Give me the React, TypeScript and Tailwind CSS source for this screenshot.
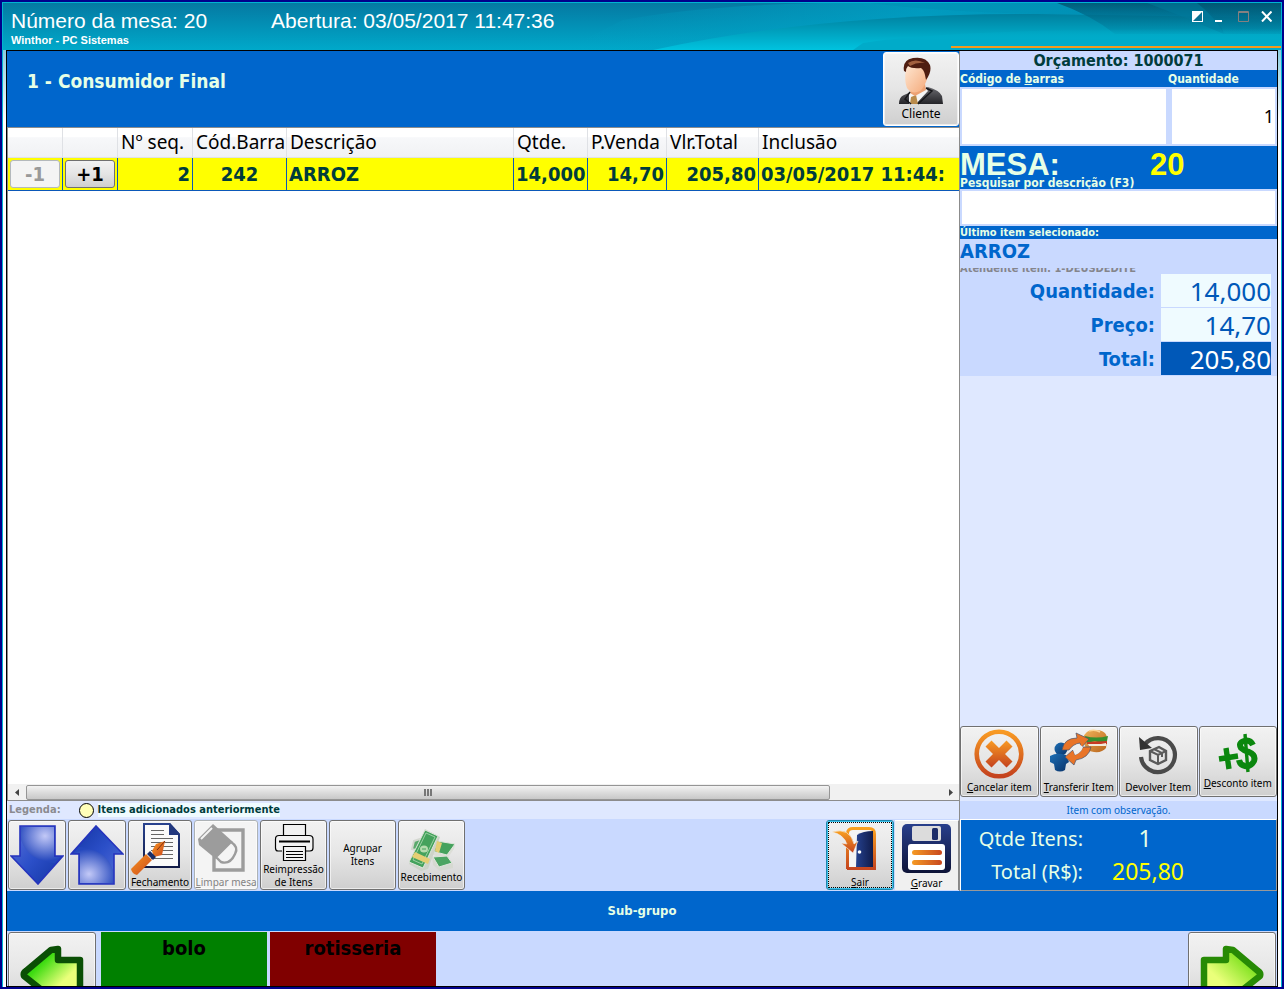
import type { ReactNode } from "react";

const BOLD = "font-['DejaVu_Sans_Condensed','DejaVu_Sans',sans-serif] font-bold";

type ToolButtonProps = {
  children: ReactNode;
  className?: string;
  disabled?: boolean;
};

function ToolButton({ children, className = "", disabled = false }: ToolButtonProps) {
  return (
    <button
      type="button"
      disabled={disabled}
      className={
        "flex shrink-0 flex-col items-center overflow-hidden rounded-[3px] border bg-linear-to-b text-[10px] leading-[13px] whitespace-nowrap ring-1 ring-white/60 ring-inset " +
        (disabled
          ? "border-[#adb2b5] bg-[#f4f4f4] text-[#838383] "
          : "border-[#707070] from-[#f2f2f2] from-0% via-[#e6e6e6] via-48% to-[#cfcfcf] text-black ") +
        className
      }
    >
      {children}
    </button>
  );
}

function HeaderBackdrop() {
  return (
    <svg className="absolute inset-0 h-full w-full" viewBox="0 0 1278 47" preserveAspectRatio="none" aria-hidden="true">
      <defs>
        <linearGradient id="hb" x1="0" y1="0" x2="0" y2="1">
          <stop offset="0" stopColor="#0579a2" />
          <stop offset="1" stopColor="#00a9ca" />
        </linearGradient>
        <linearGradient id="hc" x1="0" y1="0" x2="1" y2="0">
          <stop offset="0" stopColor="#00a3c6" stopOpacity="0" />
          <stop offset="0.5" stopColor="#00a3c6" stopOpacity="0.75" />
          <stop offset="1" stopColor="#0092b8" stopOpacity="0.6" />
        </linearGradient>
        <linearGradient id="hd" x1="0" y1="0" x2="0" y2="1">
          <stop offset="0" stopColor="#00809f" />
          <stop offset="1" stopColor="#00c3df" />
        </linearGradient>
        <linearGradient id="he" x1="0" y1="0" x2="0" y2="1">
          <stop offset="0" stopColor="#005773" stopOpacity="0.9" />
          <stop offset="1" stopColor="#007d9f" stopOpacity="0.25" />
        </linearGradient>
        <linearGradient id="hf" x1="0" y1="0" x2="0" y2="1">
          <stop offset="0" stopColor="#00abc9" stopOpacity="0" />
          <stop offset="0.5" stopColor="#00abc9" />
        </linearGradient>
      </defs>
      <rect width="1278" height="47" fill="url(#hb)" />
      <path d="M560 47 L620 17 Q700 2 820 0 H1278 V47Z" fill="url(#hc)" />
      <path d="M650 47 Q820 10 1035 11 L1278 15 V47Z" fill="url(#hd)" />
      <path d="M868 0 Q950 10 1054 11 H1078 L1054 0Z" fill="#0090b4" opacity="0.5" />
      <path d="M1054 0 Q1088 12 1112 31 H1278 V0Z" fill="url(#he)" />
      <path d="M1144 0 Q1182 14 1221 31 Q1215 12 1194 0Z" fill="#007a9c" opacity="0.5" />
      <path d="M1194 0 Q1212 14 1221 31 H1278 V0Z" fill="url(#he)" />
      <path d="M860 40 Q960 24 1278 26 V47 H850Z" fill="url(#hf)" />
    </svg>
  );
}

function ClientIcon() {
  return (
    <svg width="46" height="48" viewBox="0 0 46 48" aria-hidden="true">
      <defs>
        <linearGradient id="face" x1="0" y1="0" x2="1" y2="1">
          <stop offset="0" stopColor="#ffe9d5" />
          <stop offset="1" stopColor="#f4a878" />
        </linearGradient>
        <linearGradient id="suit" x1="0" y1="0" x2="0" y2="1">
          <stop offset="0" stopColor="#6b6b70" />
          <stop offset="1" stopColor="#242428" />
        </linearGradient>
      </defs>
      <path d="M1 47 Q1 40 6 38 L13 35 L30 30 Q41 33 44 39 L45 47Z" fill="url(#suit)" />
      <path d="M11 36 L14 33 L27 30 L30 34 L18 47 H11Z" fill="#f5f5f5" />
      <path d="M13 40 L18 38 L20 47 H12Z" fill="#b98b4c" />
      <path d="M14 28 L27 27 L28 33 L17 39 L12 36Z" fill="#eda274" />
      <path d="M8 12 Q6 24 9 31 Q14 38 22 34 Q27 30 30 19 L29 8 Q14 2 8 12Z" fill="url(#face)" />
      <path d="M6 14 Q4 3 15 1 Q28 -1 32 8 Q34 15 28 23 L27 18 Q26 13 23 11 Q14 12 10 9 Q8 11 8 15Z" fill="#4f1d10" />
      <path d="M10 6 Q17 1 27 6 Q19 5 12 9Z" fill="#a2603f" />
      <path d="M28 31 L34 34 L20 47 M12 35 L7 42 L13 47" fill="none" stroke="#17171a" strokeWidth="1.5" />
    </svg>
  );
}

function CancelIcon() {
  return (
    <svg width="50" height="50" viewBox="0 0 50 50" aria-hidden="true">
      <defs>
        <linearGradient id="cx" x1="0" y1="0" x2="0" y2="1">
          <stop offset="0" stopColor="#f89a23" />
          <stop offset="1" stopColor="#c4421e" />
        </linearGradient>
      </defs>
      <circle cx="25" cy="25" r="22.3" fill="none" stroke="url(#cx)" strokeWidth="4.6" />
      <path d="M17.500 11.500 L25 19 L32.500 11.500 L38.500 17.500 L31 25 L38.500 32.500 L32.500 38.500 L25 31 L17.500 38.500 L11.500 32.500 L19 25 L11.500 17.500Z" fill="url(#cx)" />
    </svg>
  );
}

function TransferIcon() {
  return (
    <svg width="60" height="43" viewBox="0 0 60 43" aria-hidden="true">
      <defs>
        <linearGradient id="bun" x1="0" y1="0" x2="1" y2="1">
          <stop offset="0" stopColor="#f1b45a" />
          <stop offset="1" stopColor="#b8641c" />
        </linearGradient>
        <linearGradient id="person" x1="0" y1="0" x2="1" y2="1">
          <stop offset="0" stopColor="#1d6fb5" />
          <stop offset="1" stopColor="#0a3268" />
        </linearGradient>
      </defs>
      <path d="M34 9 Q37 0 46 1 Q58 1 58 10 L57 19 Q53 24 45 23 Q37 22 36 17Z" fill="url(#bun)" />
      <path d="M36 7 Q47 10 59 7 L58 12 L52 14 L46 12 L38 14Z" fill="#35902e" />
      <path d="M40 2 Q46 0 51 3" stroke="#fbd595" strokeWidth="1.5" fill="none" />
      <path d="M38 13 L58 12 V15 H38Z" fill="#c63a23" />
      <path d="M39 15 L52 15 L57 14 V17 H40Z" fill="#f3ead9" />
      <circle cx="12" cy="20" r="6.5" fill="url(#person)" />
      <path d="M1 27 Q8 23 17 26 L20 33 L17 35 L16 41 Q11 44 6 41 L5 35 L1 33Z" fill="url(#person)" />
      <path d="M13 21 Q15 9 28 9 L27 4 L40 10 L32 19 L31 14 Q24 15 20 21Z" fill="#e87428" stroke="#48516b" strokeWidth="0.7" />
      <path d="M42 18 Q40 29 27 31 L25 36 L16 28 L24 21 L26 26 Q32 24 34 18Z" fill="#e87428" stroke="#48516b" strokeWidth="0.7" />
      <path d="M22 21 Q25 16 30 15 L34 18 Q32 24 26 26 L24 21Z" fill="#eeeeee" />
    </svg>
  );
}

function ReturnIcon() {
  return (
    <svg width="40" height="40" viewBox="0 0 40 40" aria-hidden="true">
      <path d="M7 9 A17 17 0 1 1 3 22" fill="none" stroke="#4a4a4a" strokeWidth="4.2" />
      <path d="M1 2 L2 15 L14 13Z" fill="#333" />
      <path d="M12 16 L21 12 L28 16 V25 L20 29 L12 25Z" fill="#e4e4e4" stroke="#5a5a5a" strokeWidth="2.4" />
      <path d="M12 16 L20 20 L28 16 M20 20 V29 M16 14 L24 18 V22" fill="none" stroke="#5a5a5a" strokeWidth="2" />
    </svg>
  );
}

function DiscountIcon() {
  return (
    <svg width="40" height="40" viewBox="0 0 40 40" aria-hidden="true">
      <g fill="none" stroke="#0b870e">
        <path d="M1 26 L20 23 M8 15 L11 36" strokeWidth="5.4" />
        <path d="M35 12 Q32 6 26 8 Q20 10 23 15 Q26 18 31 19 Q38 22 36 28 Q33 34 27 33 Q22 32 21 27" strokeWidth="6" />
        <path d="M27 1 L30 39" strokeWidth="3.4" />
      </g>
    </svg>
  );
}

function BlueArrow({ up = false }: { up?: boolean }) {
  return (
    <svg width="54" height="60" viewBox="0 0 54 60" aria-hidden="true" className={up ? "rotate-180" : ""}>
      <defs>
        <linearGradient id={up ? "bau" : "bad"} x1="0" y1="0" x2="1" y2="1">
          <stop offset="0" stopColor="#5b72d8" />
          <stop offset="0.5" stopColor="#2b4fc8" />
          <stop offset="1" stopColor="#1233a0" />
        </linearGradient>
        <radialGradient id={up ? "bgu" : "bgd"} cx="0.6" cy="0.25" r="0.7">
          <stop offset="0" stopColor="#c3c9f7" />
          <stop offset="1" stopColor="#2447bd" />
        </radialGradient>
      </defs>
      <path d="M10 1 H45 V31 H53 L28 59 L1 31 H10Z" fill={up ? "url(#bau)" : "url(#bad)"} />
      <path d="M11 2 H44 V32 H51 L45 38 Q18 36 11 15Z" fill={up ? "url(#bgu)" : "url(#bgd)"} />
      <path d="M10 1 H45 V31 H53 L28 59 L1 31 H10Z" fill="none" stroke="#2533bd" strokeWidth="1.6" />
    </svg>
  );
}

function InvoiceIcon() {
  return (
    <svg width="50" height="53" viewBox="0 0 50 53" aria-hidden="true" className="ml-[2px] self-start">
      <defs>
        <linearGradient id="pen" x1="0" y1="0" x2="1" y2="1">
          <stop offset="0" stopColor="#f7941e" />
          <stop offset="1" stopColor="#cc4a20" />
        </linearGradient>
        <linearGradient id="doc" x1="0" y1="0" x2="0" y2="1">
          <stop offset="0" stopColor="#28428f" />
          <stop offset="1" stopColor="#111a45" />
        </linearGradient>
      </defs>
      <path d="M12 0 H39 L49 11 V45 H12Z" fill="url(#doc)" />
      <path d="M14 2 H38 V12 H47 V43 H14Z" fill="#fafafa" />
      <path d="M39 0 L49 11 H39Z" fill="#22387e" />
      <path d="M20 7.5 H33 M20 11.5 H33 M20 15.5 H42 M20 19.500 H42 M20 23.500 H42 M20 27.500 H42 M20 31.500 H42 M20 35.500 H42" stroke="#666" />
      <path d="M34 18 L31 32 L23 34 L21 28 L25 21Z" fill="url(#pen)" />
      <path d="M34 18 L26 27" stroke="#7b2e12" strokeWidth="1" />
      <path d="M19 28 L25 34 L22 37 L16 31Z" fill="#1b2c66" />
      <path d="M15 31 L21 37 L6 52 Q1 51 0 46Z" fill="url(#pen)" />
    </svg>
  );
}

function EraserIcon() {
  return (
    <svg width="50" height="50" viewBox="0 0 50 50" aria-hidden="true" className="ml-[2px] self-start">
      <path d="M17 7 H46 V47 H17 V33" fill="none" stroke="#9c9c9c" strokeWidth="3.4" />
      <path d="M1 16 L16 1 L36 19 L19 36 L2 22Z" fill="#9c9c9c" />
      <path d="M4 16 L15 5" stroke="#f4f4f4" strokeWidth="2" />
      <path d="M34 19 Q42 24 38 31 Q33 42 24 39 L19 34Z" fill="#f4f4f4" stroke="#9c9c9c" strokeWidth="2.4" />
    </svg>
  );
}

function PrinterIcon() {
  return (
    <svg width="40" height="38" viewBox="0 0 40 38" aria-hidden="true">
      <g fill="#f2f2f2" stroke="#000" strokeWidth="1.2">
        <path d="M9.500 13 V1.500 H31.500 V13" />
        <path d="M8 28 H4 Q1.500 28 1.500 25 V16 Q1.500 12.500 5 12.500 H35 Q39 12.500 39 16 V25 Q39 28 36 28 H32" />
        <path d="M9.500 37.500 V23.500 H31.500 V37.500Z" />
        <path d="M5 18.500 H36" strokeWidth="2" />
        <path d="M12 28.500 H29 M12 31.500 H29 M12 34.500 H29" />
      </g>
    </svg>
  );
}

function MoneyIcon() {
  return (
    <svg width="46" height="42" viewBox="0 0 46 42" aria-hidden="true">
      <path d="M5 12 L14 9 L18 24 L3 20Z" fill="#5ba96c" stroke="#d3d7cf" strokeWidth="2" />
      <path d="M28 12 L46 15 L45 20 L37 31 L22 25Z" fill="#dcded7" />
      <path d="M28 12 L46 15 L38 26 L23 22Z" fill="#45a25d" stroke="#dfe6dc" />
      <path d="M23 28 L38 26 L44 35 V39 L31 42 L24 36Z" fill="#d6d9d1" />
      <path d="M24 28 L38 27 L43 34 L30 38Z" fill="#4ca562" stroke="#dfe6dc" />
      <path d="M16 0 L31 8 L19 40 L12 42 L0 35Z" fill="#cdd3c8" />
      <path d="M16 1 L29 7 L14 39 L0 33Z" fill="#44a25c" stroke="#dfe6dc" />
      <path d="M17 4 L26 8 L13 35 L4 31Z" fill="none" stroke="#9acfa2" />
      <ellipse cx="15" cy="20" rx="4" ry="3.500" fill="#b5dcae" />
      <path d="M13 20 H17" stroke="#44a25c" />
      <path d="M6 23 L21 30 L19 35 L3 28Z M28 12 L33 14 L30 24 L26 22Z" fill="#e5cf74" />
    </svg>
  );
}

function ExitIcon() {
  return (
    <svg width="46" height="46" viewBox="0 0 46 46" aria-hidden="true" className="ml-1 self-start">
      <defs>
        <linearGradient id="ex" x1="0" y1="0" x2="0" y2="1">
          <stop offset="0" stopColor="#f9a01f" />
          <stop offset="1" stopColor="#c5451f" />
        </linearGradient>
        <linearGradient id="door" x1="0" y1="0" x2="1" y2="0">
          <stop offset="0" stopColor="#25418e" />
          <stop offset="1" stopColor="#101c4b" />
        </linearGradient>
      </defs>
      <path d="M16.500 43 V7 Q17 2.500 22 2.500 H38 Q43.500 2.500 43.500 8 V42.500 H16" fill="#f4f4f4" stroke="url(#ex)" strokeWidth="3" />
      <path d="M26 9 Q32 5 42 5 V41 H25Z" fill="url(#door)" />
      <circle cx="28.500" cy="26" r="1.800" fill="#fff" />
      <path d="M1 6 Q19 1 23 18 L27 15 L22 27 L10 17 L16 18 Q12 8 1 6Z" fill="url(#ex)" stroke="#f4f4f4" strokeWidth="0.6" />
    </svg>
  );
}

function SaveIcon() {
  return (
    <svg width="49" height="49" viewBox="0 0 49 49" aria-hidden="true">
      <defs>
        <linearGradient id="sv" x1="0" y1="0" x2="0" y2="1">
          <stop offset="0" stopColor="#283f8c" />
          <stop offset="1" stopColor="#0e1438" />
        </linearGradient>
        <linearGradient id="sl" x1="0" y1="0" x2="1" y2="0">
          <stop offset="0" stopColor="#f59a24" />
          <stop offset="1" stopColor="#c8481f" />
        </linearGradient>
      </defs>
      <rect width="49" height="49" rx="5" fill="url(#sv)" />
      <rect x="10" y="2" width="29" height="15" rx="2" fill="#dcdcdc" />
      <rect x="30" y="4" width="6" height="12" rx="1.500" fill="#1c2c68" />
      <rect x="6" y="20" width="37" height="26" rx="3" fill="#fff" />
      <rect x="10" y="26" width="30" height="5" rx="2.500" fill="url(#sl)" />
      <rect x="10" y="36" width="30" height="5" rx="2.500" fill="url(#sl)" />
    </svg>
  );
}

function GreenArrow({ right = false }: { right?: boolean }) {
  return (
    <svg width="64" height="64" viewBox="0 0 64 64" aria-hidden="true" className={right ? "shrink-0 -scale-x-100" : "shrink-0"}>
      <defs>
        <linearGradient id={right ? "gr" : "gl"} x1="0" y1="0" x2="1" y2="1">
          <stop offset="0" stopColor={right ? "#3fb80a" : "#08ba08"} />
          <stop offset="0.3" stopColor={right ? "#8fe62c" : "#3fdc12"} />
          <stop offset="0.65" stopColor="#eaff7a" />
        </linearGradient>
      </defs>
      <path
        d="M38 4 V15 H60 V46 H38 V58 L4 31 Q3 28 6 26 L31 5Z"
        fill={right ? "url(#gr)" : "url(#gl)"}
        stroke={right ? "#278a05" : "#0a4f05"}
        strokeWidth="6.500"
        strokeLinejoin="round"
      />
    </svg>
  );
}

function TitleBar() {
  return (
    <header className="relative h-[47px] shrink-0 overflow-hidden text-white">
      <HeaderBackdrop />
      <div className="absolute right-0 bottom-[2px] h-[2px] w-[330px] bg-[#f39a1c]" />
      <div className="relative flex items-start justify-between pl-2 font-['Liberation_Sans',sans-serif]">
        <div>
          <div className="flex gap-16 pt-[6px] text-[21px] leading-6">
            <h1>Número da mesa: 20</h1>
            <p>Abertura: 03/05/2017 11:47:36</p>
          </div>
          <p className="pt-px text-[11px] leading-[13px] font-bold">Winthor - PC Sistemas</p>
        </div>
        <div className="flex gap-3 pt-2 pr-[9px]">
          <button type="button" aria-label="Tema">
            <svg width="11" height="11" viewBox="0 0 11 11"><path d="M0 0H11V11H0Z" fill="#fff" /><path d="M10 1V10H1Z" fill="#087091" /></svg>
          </button>
          <button type="button" aria-label="Minimizar">
            <svg width="11" height="11" viewBox="0 0 11 11"><path d="M0 9H7V11H0Z" fill="#fff" /></svg>
          </button>
          <button type="button" aria-label="Maximizar">
            <svg width="11" height="11" viewBox="0 0 11 11"><path d="M.5.5H10.500V10.500H.5Z M0 1.500H11" fill="none" stroke="#858080" /></svg>
          </button>
          <button type="button" aria-label="Fechar">
            <svg width="11" height="11" viewBox="0 0 11 11"><path d="M1 0.500L10.500 10.500M10.500 .5L1 10.500" stroke="#fff" strokeWidth="2" /></svg>
          </button>
        </div>
      </div>
    </header>
  );
}

const columns = ["Nº seq.", "Cód.Barra", "Descrição", "Qtde.", "P.Venda", "Vlr.Total", "Inclusão"];

function ItemsTable() {
  const cell = "border-r border-b border-[#0b58b8] p-0 px-[2px] whitespace-nowrap ";
  return (
    <table className="w-full table-fixed border-separate border-spacing-0">
      <colgroup>
        <col className="w-[55px]" />
        <col className="w-[55px]" />
        <col className="w-[75px]" />
        <col className="w-[94px]" />
        <col className="w-[227px]" />
        <col className="w-[74px]" />
        <col className="w-[79px]" />
        <col className="w-[92px]" />
        <col />
      </colgroup>
      <thead>
        <tr className="h-[30px] bg-linear-to-b from-white from-30% via-[#f7f8fa] via-32% to-[#f0f1f3] text-left text-[19px] leading-[29px]">
          <th aria-label="Diminuir" className="border-r border-b border-[#dfe1e5] p-0" />
          <th aria-label="Aumentar" className="border-r border-b border-[#dfe1e5] p-0" />
          {columns.map((name) => (
            <th key={name} className="border-r border-b border-[#dfe1e5] p-0 pl-[3px] font-normal whitespace-nowrap last:border-r-0">
              {name}
            </th>
          ))}
        </tr>
      </thead>
      <tbody>
        <tr className={"h-[33px] bg-[#ffff00] text-[20px] leading-8 text-[#003c3c] " + BOLD}>
          <td className={cell}>
            <button type="button" disabled className="block h-7 w-full rounded-[3px] border border-[#b4b9bc] bg-[#f4f4f4] leading-6 text-[#999]">
              -1
            </button>
          </td>
          <td className={cell}>
            <button type="button" className="block h-7 w-full rounded-[3px] border border-[#707070] bg-linear-to-b from-[#f2f2f2] via-[#e4e4e4] to-[#cfcfcf] leading-6 text-black">
              +1
            </button>
          </td>
          <td className={cell + "text-right"}>2</td>
          <td className={cell + "text-center"}>242</td>
          <td className={cell}>ARROZ</td>
          <td className={cell}>14,000</td>
          <td className={cell + "text-right"}>14,70</td>
          <td className={cell + "text-right"}>205,80</td>
          <td className="border-b border-[#0b58b8] p-0 pl-[2px] whitespace-nowrap">03/05/2017 11:44:</td>
        </tr>
      </tbody>
    </table>
  );
}

function ScrollBar() {
  return (
    <div className="flex h-[17px] shrink-0 items-center border-b border-[#8c8c8c] bg-[#f1f1f1]">
      <button type="button" aria-label="Rolar para a esquerda" className="flex w-[18px] justify-center">
        <svg width="4" height="7" viewBox="0 0 4 7"><path d="M4 0V7L0 3.500Z" fill="#444" /></svg>
      </button>
      <div className="flex h-[15px] w-[804px] items-center justify-center gap-px rounded-[2px] border border-[#959595] bg-linear-to-b from-[#f3f3f3] via-[#dcdcdc] to-[#c8c8c8]">
        <span className="h-[7px] w-[2px] bg-[#777]" />
        <span className="h-[7px] w-[2px] bg-[#777]" />
        <span className="h-[7px] w-[2px] bg-[#777]" />
      </div>
      <button type="button" aria-label="Rolar para a direita" className="mr-[6px] ml-auto">
        <svg width="4" height="7" viewBox="0 0 4 7"><path d="M0 0V7L4 3.500Z" fill="#444" /></svg>
      </button>
    </div>
  );
}

function Toolbar() {
  return (
    <div className="flex h-[72px] shrink-0 items-stretch gap-[2px] bg-[#c9d9ff] py-px pl-px">
      <ToolButton className="w-[58px] justify-center">
        <span className="sr-only">Descer</span>
        <BlueArrow />
      </ToolButton>
      <ToolButton className="w-[58px] justify-center">
        <span className="sr-only">Subir</span>
        <BlueArrow up />
      </ToolButton>
      <ToolButton className="w-[64px] justify-between pt-[2px]">
        <InvoiceIcon />
        <span>Fechamento</span>
      </ToolButton>
      <ToolButton disabled className="w-[64px] justify-between pt-[2px]">
        <EraserIcon />
        <span><u>L</u>impar mesa</span>
      </ToolButton>
      <ToolButton className="w-[67px] justify-end">
        <PrinterIcon />
        <span className="pt-[2px]">Reimpressão<br />de Itens</span>
      </ToolButton>
      <ToolButton className="w-[67px] justify-center">
        <span>Agrupar<br />Itens</span>
      </ToolButton>
      <ToolButton className="w-[67px] justify-end pb-[5px]">
        <MoneyIcon />
        <span>Recebimento</span>
      </ToolButton>
      <div className="ml-auto flex gap-px">
        <ToolButton className="w-[68px] justify-between border-[#1f86ab]! pt-[5px] ring-[#3cc3ee]! outline-1 -outline-offset-3 outline-black outline-dotted">
          <ExitIcon />
          <span><u>S</u>air</span>
        </ToolButton>
        <button type="button" className="flex w-[64px] flex-col items-center justify-between border-t border-r border-t-white border-r-[#888] bg-[#f0f0f0] pt-[3px] text-[10px] leading-[13px]">
          <SaveIcon />
          <span><u>G</u>ravar</span>
        </button>
      </div>
    </div>
  );
}

function OrderPanel() {
  return (
    <section className="flex min-w-0 flex-1 flex-col border-r border-[#8c8c8c]">
      <div className="flex h-[76px] shrink-0 justify-between bg-[#0066cc]">
        <h2 className={"pt-[18px] pl-5 text-[19px] leading-6 text-[#e6ffe6] " + BOLD}>1 - Consumidor Final</h2>
        <ToolButton className="mt-px h-[74px] w-[76px] justify-between border-white! pt-1 pb-[3px]">
          <ClientIcon />
          <span className="text-[12px] leading-4">Cliente</span>
        </ToolButton>
      </div>
      <div className="flex min-h-0 flex-1 flex-col overflow-hidden border-t border-l border-[#8c8c8c] bg-white">
        <div className="min-h-0 flex-1 overflow-hidden">
          <ItemsTable />
        </div>
        <ScrollBar />
      </div>
      <div className={"flex h-[18px] shrink-0 items-center bg-[#dfe8ff] pl-[2px] text-[11px] leading-[14px] " + BOLD}>
        <span className="text-[#8b8b90]">Legenda:</span>
        <span className="ml-[18px] size-[15px] rounded-full border border-black bg-[#ffffb9]" />
        <span className="ml-1 bg-[#effbff] text-[#003c3c]">Itens adicionados anteriormente</span>
      </div>
      <Toolbar />
    </section>
  );
}

const itemTotals = [
  { label: "Quantidade:", value: "14,000", tone: "bg-[#effbff] text-[#0058b8]" },
  { label: "Preço:", value: "14,70", tone: "bg-[#effbff] text-[#0058b8]" },
  { label: "Total:", value: "205,80", tone: "bg-[#0058b8] text-white" },
];

function EntryPanel() {
  const light = "text-[#e6ffe6] ";
  return (
    <aside className="flex w-[317px] shrink-0 flex-col bg-[#dfe8ff]">
      <h2 className={"h-[19px] bg-[#c9d9ff] text-center text-[16px] leading-[20px] text-[#003c3c] " + BOLD}>Orçamento: 1000071</h2>
      <div className={"flex h-[17px] bg-[#0066cc] text-[12px] leading-[18px] " + light + BOLD}>
        <label htmlFor="barcode" className="w-[208px]">Código de <u>b</u>arras</label>
        <label htmlFor="quantity">Quantidade</label>
      </div>
      <div className="flex h-[59px] gap-[6px] bg-[#c9d9ff] px-[2px] py-[2px]">
        <input id="barcode" className="min-w-0 flex-1 bg-white px-1 text-[18px] outline-none" />
        <input id="quantity" defaultValue="1" className="w-[103px] bg-white pr-px text-right text-[18px] outline-none" />
      </div>
      <div className={"flex h-[43px] flex-col overflow-hidden bg-[#0066cc] " + light}>
        <div className="flex h-[30px] font-['Liberation_Sans',sans-serif] text-[31px] leading-[37px] font-bold">
          <span className="w-[190px]">MESA:</span>
          <span className="text-[#ffff00]">20</span>
        </div>
        <label htmlFor="search" className={"relative text-[12px] leading-[14px] " + BOLD}>Pesquisar por descrição (F3)</label>
      </div>
      <div className="flex h-[37px] bg-[#c9d9ff] p-[2px]">
        <input id="search" className="min-w-0 flex-1 bg-white px-1 text-[18px] outline-none" />
      </div>
      <p className={"h-[13px] bg-[#0066cc] text-[11px] leading-[14px] " + light + BOLD}>Último item selecionado:</p>
      <div className="h-[137px] bg-[#c9d9ff]">
        <p className={"h-[29px] text-[20px] leading-6 text-[#0066cc] " + BOLD}>ARROZ</p>
        <div className={"flex h-[6px] items-end overflow-hidden text-[11px] leading-[14px] text-[#85858c] " + BOLD}>
          <span className="-mb-[2px]">Atendente item: 1-DEUSDEDITE</span>
        </div>
        <dl className="flex flex-col gap-px pr-[6px]">
          {itemTotals.map((row) => (
            <div key={row.label} className="flex h-[33px] justify-end gap-[6px]">
              <dt className={"text-[20px] leading-[35px] text-[#0066cc] " + BOLD}>{row.label}</dt>
              <dd className={"w-[110px] text-right text-[26px] leading-[34px] " + row.tone}>{row.value}</dd>
            </div>
          ))}
        </dl>
      </div>
      <div className="mt-auto flex gap-px pb-1">
        <ToolButton className="h-[71px] flex-1 justify-between pt-[2px] pb-[2px]">
          <CancelIcon />
          <span><u>C</u>ancelar item</span>
        </ToolButton>
        <ToolButton className="h-[71px] flex-1 justify-between pt-[2px] pb-[2px]">
          <TransferIcon />
          <span><u>T</u>ransferir Item</span>
        </ToolButton>
        <ToolButton className="h-[71px] flex-1 justify-between pt-[8px] pb-[2px]">
          <ReturnIcon />
          <span>Devolver Item</span>
        </ToolButton>
        <ToolButton className="h-[71px] flex-1 justify-between pt-[6px] pb-[6px]">
          <DiscountIcon />
          <span><u>D</u>esconto item</span>
        </ToolButton>
      </div>
      <p className="h-[18px] shrink-0 bg-[#c9d9ff] text-center text-[10px] leading-[18px] text-[#0066cc]">Item com observação.</p>
      <dl className={"grid h-[72px] shrink-0 grid-cols-[122px_124px] content-center border border-t-white border-r-[#999] border-b-[#999] border-l-white bg-[#0066cc] text-[20px] leading-[33px] " + light}>
        <dt className="text-right">Qtde Itens:</dt>
        <dd className="text-center text-[23px]">1</dd>
        <dt className="text-right">Total (R$):</dt>
        <dd className="pl-[29px] text-[23px] text-[#ffff00]">205,80</dd>
      </dl>
    </aside>
  );
}

function SubgroupBar() {
  return (
    <footer className="shrink-0">
      <h2 className={"h-10 bg-[#0066cc] text-center text-[13px] leading-10 text-[#e6ffe6] " + BOLD}>Sub-grupo</h2>
      <div className="flex h-[55px] overflow-hidden bg-[#c9d9ff] px-px pt-px">
        <ToolButton className="h-[80px] w-[88px] pt-3">
          <span className="sr-only">Anterior</span>
          <GreenArrow />
        </ToolButton>
        <button type="button" className={"ml-[5px] h-[80px] w-[166px] bg-[#008000] pb-12 text-[20px] leading-6 text-black " + BOLD}>bolo</button>
        <button type="button" className={"ml-[3px] h-[80px] w-[166px] bg-[#800000] pb-12 text-[20px] leading-6 text-black " + BOLD}>rotisseria</button>
        <ToolButton className="ml-auto h-[80px] w-[88px] pt-3">
          <span className="sr-only">Próximo</span>
          <GreenArrow right />
        </ToolButton>
      </div>
    </footer>
  );
}

export default function App() {
  return (
    <div className="flex h-screen flex-col border-2 border-[#00008b] bg-[#00008b] font-['Noto_Sans',sans-serif]">
      <div className="flex min-h-0 flex-1 flex-col border-x border-t border-[#00b4d2] bg-linear-to-b from-[#00a9ca] via-white via-12% to-white">
        <TitleBar />
        <main className="mx-[3px] flex min-h-0 flex-1 flex-col border border-black">
          <div className="flex min-h-0 flex-1">
            <OrderPanel />
            <EntryPanel />
          </div>
          <SubgroupBar />
        </main>
      </div>
    </div>
  );
}
